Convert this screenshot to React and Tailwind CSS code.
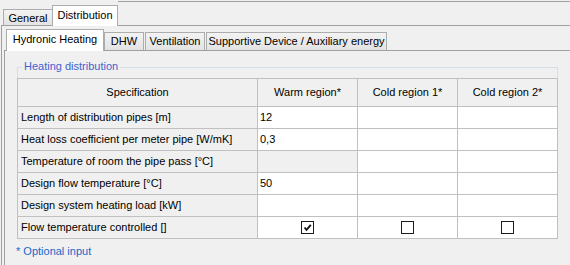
import React from "react";

const rows = [
  { label: "Length of distribution pipes [m]", warm: "12" },
  { label: "Heat loss coefficient per meter pipe [W/mK]", warm: "0,3" },
  { label: "Temperature of room the pipe pass [°C]", warm: "", grayWarm: true },
  { label: "Design flow temperature [°C]", warm: "50" },
  { label: "Design system heating load [kW]", warm: "" },
  { label: "Flow temperature controlled []", check: [true, false, false] },
];

function Tab({ label, selected, className = "" }) {
  if (selected) {
    return (
      <div
        className={`relative z-10 -mb-px flex items-center justify-center border border-b-0 border-[#acacac] bg-white ${className}`}
      >
        {label}
      </div>
    );
  }
  return (
    <div
      className={`flex items-center justify-center border border-b-0 border-[#acacac] bg-linear-to-b from-[#f3f3f3] to-[#e3e3e3] ${className}`}
    >
      {label}
    </div>
  );
}

function CheckBox({ checked }) {
  return (
    <div className="flex h-[13px] w-[13px] items-center justify-center border border-[#1b1b1b] bg-white">
      {checked && (
        <svg width="11" height="11" viewBox="0 0 11 11">
          <path d="M2.5 5.5 L4.5 7.8 L8.8 2.8" fill="none" stroke="#111" strokeWidth="1.8" />
        </svg>
      )}
    </div>
  );
}

export default function App() {
  return (
    <div className="relative h-[265px] w-[570px] overflow-hidden bg-[#f0f0f0] font-['Liberation_Sans',Arial,sans-serif] text-[11px] leading-none text-black">
      {/* outer tabs */}
      <div className="flex h-[25px] items-end pl-[3px]">
        <Tab label="General" className="h-[16px] w-[50px] pt-px" />
        <Tab label="Distribution" selected className="-ml-px h-[21px] w-[66px] pb-[2px]" />
        <div className="mt-px flex-1 self-start border-t border-[#a0a0a0]" />
      </div>

      <div className="ml-px h-[240px] border-l border-t border-[#a0a0a0]">
        {/* inner tabs */}
        <div className="ml-[2px] flex h-[24px] items-end pl-[2px]">
          <Tab label="Hydronic Heating" selected className="h-[22px] w-[98px] pb-[2px]" />
          <Tab label="DHW" className="h-[18px] w-[40px]" />
          <Tab label="Ventilation" className="ml-px h-[18px] w-[60px]" />
          <Tab label="Supportive Device / Auxiliary energy" className="ml-px h-[18px] w-[181px]" />
        </div>

        <div className="ml-[2px] h-[220px] border-l border-t border-[#a0a0a0] pt-[16px]">
          {/* group box */}
          <div className="relative ml-[12px] w-[541px] border-x border-t border-[#d5dfe5] pt-[10px]">
            <div className="absolute -top-[7px] left-[4px] bg-[#f0f0f0] px-[2px] text-[#3f63cf]">
              Heating distribution
            </div>
            <div className="-mx-px grid grid-cols-[240px_100px_100px_100px] border-l border-t border-[#c0c0c0]">
              {["Specification", "Warm region*", "Cold region 1*", "Cold region 2*"].map((h) => (
                <div
                  key={h}
                  className="flex h-[28px] items-center justify-center border-b border-r border-[#c0c0c0] bg-[#f0f0f0]"
                >
                  {h}
                </div>
              ))}
              {rows.map((r) => (
                <React.Fragment key={r.label}>
                  <div className="flex h-[22px] items-center border-b border-r border-[#c0c0c0] bg-[#f0f0f0] pl-[3px]">
                    {r.label}
                  </div>
                  {r.check ? (
                    r.check.map((c, i) => (
                      <div
                        key={i}
                        className="flex h-[22px] items-center justify-center border-b border-r border-[#c0c0c0] bg-white"
                      >
                        <CheckBox checked={c} />
                      </div>
                    ))
                  ) : (
                    <>
                      <div
                        className={`flex h-[22px] items-center border-b border-r border-[#c0c0c0] pl-[2px] ${
                          r.grayWarm ? "bg-[#f0f0f0]" : "bg-white"
                        }`}
                      >
                        {r.warm}
                      </div>
                      <div className="h-[22px] border-b border-r border-[#c0c0c0] bg-white" />
                      <div className="h-[22px] border-b border-r border-[#c0c0c0] bg-white" />
                    </>
                  )}
                </React.Fragment>
              ))}
            </div>
          </div>
          <div className="ml-[11px] mt-[7px] text-[#1769c9]">* Optional input</div>
        </div>
      </div>
    </div>
  );
}
